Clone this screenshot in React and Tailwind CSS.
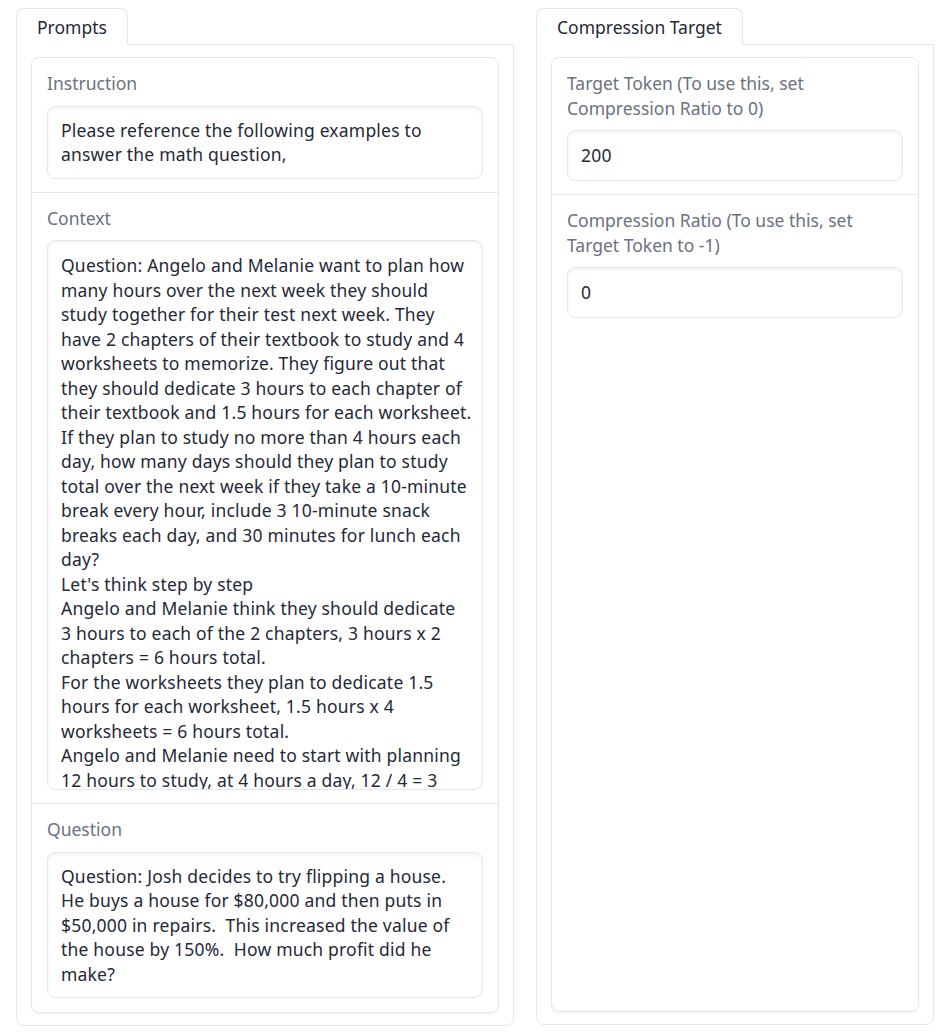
const FONT = "font-['Noto_Sans','Liberation_Sans',sans-serif]";

const instruction = [
  "Please reference the following examples to",
  "answer the math question,",
];

const context = [
  "Question: Angelo and Melanie want to plan how",
  "many hours over the next week they should",
  "study together for their test next week. They",
  "have 2 chapters of their textbook to study and 4",
  "worksheets to memorize. They figure out that",
  "they should dedicate 3 hours to each chapter of",
  "their textbook and 1.5 hours for each worksheet.",
  "If they plan to study no more than 4 hours each",
  "day, how many days should they plan to study",
  "total over the next week if they take a 10-minute",
  "break every hour, include 3 10-minute snack",
  "breaks each day, and 30 minutes for lunch each",
  "day?",
  "Let's think step by step",
  "Angelo and Melanie think they should dedicate",
  "3 hours to each of the 2 chapters, 3 hours x 2",
  "chapters = 6 hours total.",
  "For the worksheets they plan to dedicate 1.5",
  "hours for each worksheet, 1.5 hours x 4",
  "worksheets = 6 hours total.",
  "Angelo and Melanie need to start with planning",
  "12 hours to study, at 4 hours a day, 12 / 4 = 3",
];

const question = [
  "Question: Josh decides to try flipping a house.",
  "He buys a house for $80,000 and then puts in",
  "$50,000 in repairs.  This increased the value of",
  "the house by 150%.  How much profit did he",
  "make?",
];

function Lines({ lines }) {
  return lines.map((l, i) => (
    <div key={i} className="whitespace-pre">
      {l}
    </div>
  ));
}

function Field({ label, children, last }) {
  return (
    <div
      className={
        "min-w-0 px-[15px] pt-[13px] " +
        (last ? "pb-[14px]" : "pb-[13px] border-b border-[#e5e7eb]")
      }
    >
      <div className="text-[#6b7280] mb-[10px]">{label}</div>
      {children}
    </div>
  );
}

function Box({ className, children }) {
  return (
    <div
      className={
        "min-w-0 overflow-hidden border border-[#e5e7eb] rounded-lg bg-white px-[13px] text-[#1f2937] tracking-[0.2px] shadow-[inset_0_2px_4px_rgba(0,0,0,0.05)] " +
        className
      }
    >
      {children}
    </div>
  );
}

function TabPanel({ title, width, children }) {
  return (
    <div className={"flex flex-col shrink-0 " + width}>
      <div className="flex">
        <div className="relative z-10 -mb-px h-[37px] border border-b-0 border-[#e5e7eb] rounded-t-lg bg-white px-5 pt-[6px] text-[#1f2937]">
          {title}
        </div>
      </div>
      <div className="flex-1 min-w-0 border border-[#e5e7eb] rounded-b-lg px-[14px] py-[12px] flex">
        <div className="flex-1 min-w-0 flex flex-col border border-[#e5e7eb] rounded-lg shadow-[0_1px_2px_rgba(0,0,0,0.06)]">
          {children}
        </div>
      </div>
    </div>
  );
}

export default function App() {
  return (
    <div
      className={
        FONT +
        " bg-white text-[17.5px] leading-[24.5px] h-[1035px] flex gap-[22px] pl-4 pt-2 pb-[10px]"
      }
    >
      <TabPanel title="Prompts" width="w-[498px]">
        <Field label="Instruction">
          <Box className="py-[11px]">
            <Lines lines={instruction} />
          </Box>
        </Field>
        <Field label="Context">
          <Box className="pt-[12px] h-[550px]">
            <Lines lines={context} />
          </Box>
        </Field>
        <Field label="Question" last>
          <Box className="py-[11px]">
            <Lines lines={question} />
          </Box>
        </Field>
      </TabPanel>

      <TabPanel title="Compression Target" width="w-[398px]">
        <Field label={<Lines lines={["Target Token (To use this, set", "Compression Ratio to 0)"]} />}>
          <Box className="h-[51px] flex items-center">200</Box>
        </Field>
        <Field
          last
          label={<Lines lines={["Compression Ratio (To use this, set", "Target Token to -1)"]} />}
        >
          <Box className="h-[51px] flex items-center">0</Box>
        </Field>
      </TabPanel>
    </div>
  );
}
